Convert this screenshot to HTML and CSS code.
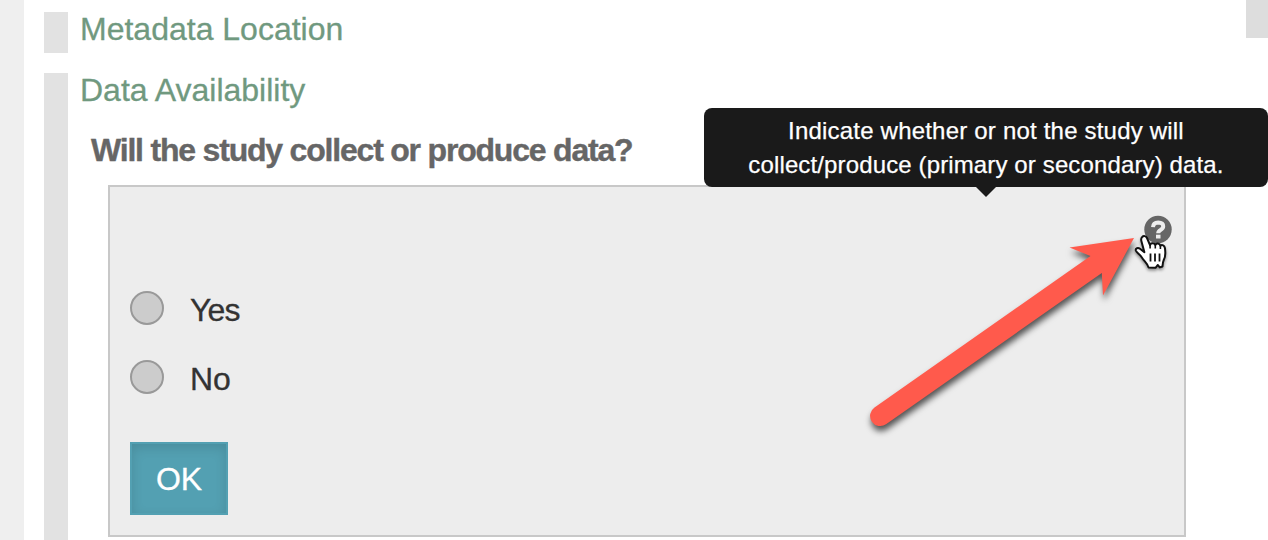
FILE: index.html
```html
<!DOCTYPE html>
<html lang="en">
<head>
<meta charset="utf-8">
<title>Data Availability</title>
<link rel="stylesheet" href="styles.css">
</head>
<body>
<div class="page">
  <main class="sections">
    <section class="section section-closed">
      <h2 class="section-title">Metadata Location</h2>
    </section>
    <section class="section section-open">
      <h2 class="section-title">Data Availability</h2>
      <h3 class="question">Will the study collect or produce data?</h3>
      <form class="panel">
        <label class="choice"><span class="radio"></span><span class="choice-yes">Yes</span></label>
        <label class="choice"><span class="radio"></span><span class="choice-no">No</span></label>
        <button class="ok" type="button">OK</button>
      </form>
    </section>
  </main>
  <div class="scroll-thumb"></div>
</div>
<div class="tooltip"><span class="tip-first">Indicate whether or not the study will</span><span class="tip-second">collect/produce (primary or secondary) data.</span></div>
<svg class="annotation" viewBox="0 0 330 240" aria-hidden="true">
  <!-- help icon -->
  <circle cx="298" cy="29.5" r="13.7" fill="#666"/>
  <path d="M293 27.200Q293.200 22.600 298.200 22.500Q303.200 22.600 303.200 26.300Q303.200 28.600 300.600 29.900Q298.200 31.200 298.200 33.300" fill="none" stroke="#eee" stroke-width="4"/>
  <path d="M296 34.700h4.500v3.800H296z" fill="#eee"/>
  <!-- arrow -->
  <path class="arrow" d="M274 38L209.500 47.500L230.500 56L14.500 207.500A10 10 0 0 0 26 224.300L241.800 73L243 95.500Z"/>
  <!-- hand cursor -->
  <path class="hand" d="M282.200 37C283.500 35.500 286 35.800 287 38L290.100 45.300C290.300 42.600 294.300 42.400 295.300 45C296.300 42.700 299.700 43 300.400 45.800C302 44.300 304.500 45.400 304.900 48C305.500 52 305.700 57 303.600 60.400C302.800 62 302.700 64 302.500 66.500L299.800 67.400L297.700 65L295.500 67.800L288.500 67.400C287.600 63.200 284.300 61.500 281.500 57C280 54.500 276.700 53 275.800 50.500C275.300 48.200 278 47.300 280 48.800L284.400 52.200L281.500 41.500C280.900 39.500 281 38 282.200 37Z"/>
  <path d="M290.500 53.500v8M295 53.500v8M299.500 53.500v8" stroke="#111" stroke-width="1.800"/>
  <path d="M290.100 44.500v4M295.300 44.500v4M300.400 45.500v3.500" stroke="#111" stroke-width="1.600"/>
</svg>
</body>
</html>
```
FILE: styles.css
```css
* { box-sizing: border-box; }
body {
  margin: 0;
  height: 540px;
  overflow: hidden;
  position: relative;
  background: #fff;
  font-family: "Liberation Sans", Arial, sans-serif;
}
.page {
  display: flex;
  height: 540px;
  border-left: 24px solid #efefef;
}
.sections {
  flex: 1;
  display: flex;
  flex-direction: column;
  gap: 20px;
  padding: 12px 0 0 20px;
}
.section {
  border-left: 24px solid #e2e2e2;
  padding-left: 12px;
}
.section-closed { height: 41px; }
.section-open { flex: 1; min-height: 0; }
.section-title {
  margin: 0;
  font-size: 32px;
  font-weight: 400;
  line-height: 35px;
  color: #70997f;
  -webkit-text-stroke: .3px #70997f;
}
.question {
  margin: 24px 0 0 11px;
  font-size: 32px;
  line-height: 36px;
  letter-spacing: -1.2px;
  color: #666;
  -webkit-text-stroke: .4px #666;
}
.panel {
  width: 1078px;
  height: 352px;
  margin: 17px 0 0 28px;
  padding: 103px 20px 0;
  border: 2px solid #c8c8c8;
  background: #ededed;
}
.choice {
  display: flex;
  align-items: center;
  gap: 26px;
  height: 36px;
  margin-bottom: 33px;
  font-size: 32px;
  color: #333;
  -webkit-text-stroke: .3px #333;
}
.radio {
  width: 34px;
  height: 34px;
  border: 2px solid #999;
  border-radius: 50%;
  background: #ccc;
}
.choice-yes, .choice-no { padding-top: 4px; }
.choice-yes { letter-spacing: -.8px; }
.ok {
  display: block;
  width: 98px;
  height: 73px;
  margin-top: 47px;
  padding: 2px 0 0;
  border: 2px solid #53a0b2;
  background: #53a0b2;
  box-shadow: inset 0 4px 12px rgba(0, 0, 0, .12);
  color: #fff;
  font: 32px "Liberation Sans", Arial, sans-serif;
  -webkit-text-stroke: .3px #fff;
}
.scroll-thumb {
  width: 22px;
  height: 38px;
  background: #ddd;
}
.tooltip {
  position: absolute;
  left: 704px;
  top: 108px;
  width: 564px;
  height: 79px;
  padding-top: 6px;
  display: flex;
  flex-direction: column;
  align-items: center;
  border-radius: 8px;
  background: #1a1a1a;
  color: #fff;
  font-size: 24px;
  line-height: 34px;
  white-space: nowrap;
  -webkit-text-stroke: .25px #fff;
}
.tip-first { letter-spacing: .2px; }
.tip-second { letter-spacing: .13px; }
.tooltip::after {
  content: "";
  position: absolute;
  left: 272px;
  top: 79px;
  border: 10px solid transparent;
  border-top-color: #1a1a1a;
  border-bottom: 0;
}
.annotation {
  position: absolute;
  left: 860px;
  top: 200px;
  width: 330px;
  height: 240px;
  overflow: visible;
}
.arrow {
  fill: #ff5a4c;
  filter: drop-shadow(1px 5px 3px rgba(0, 0, 0, .65));
}
.hand {
  fill: #fff;
  stroke: #111;
  stroke-width: 2px;
  stroke-linejoin: round;
  filter: drop-shadow(0 2px 1.5px rgba(0, 0, 0, .4));
}
```
